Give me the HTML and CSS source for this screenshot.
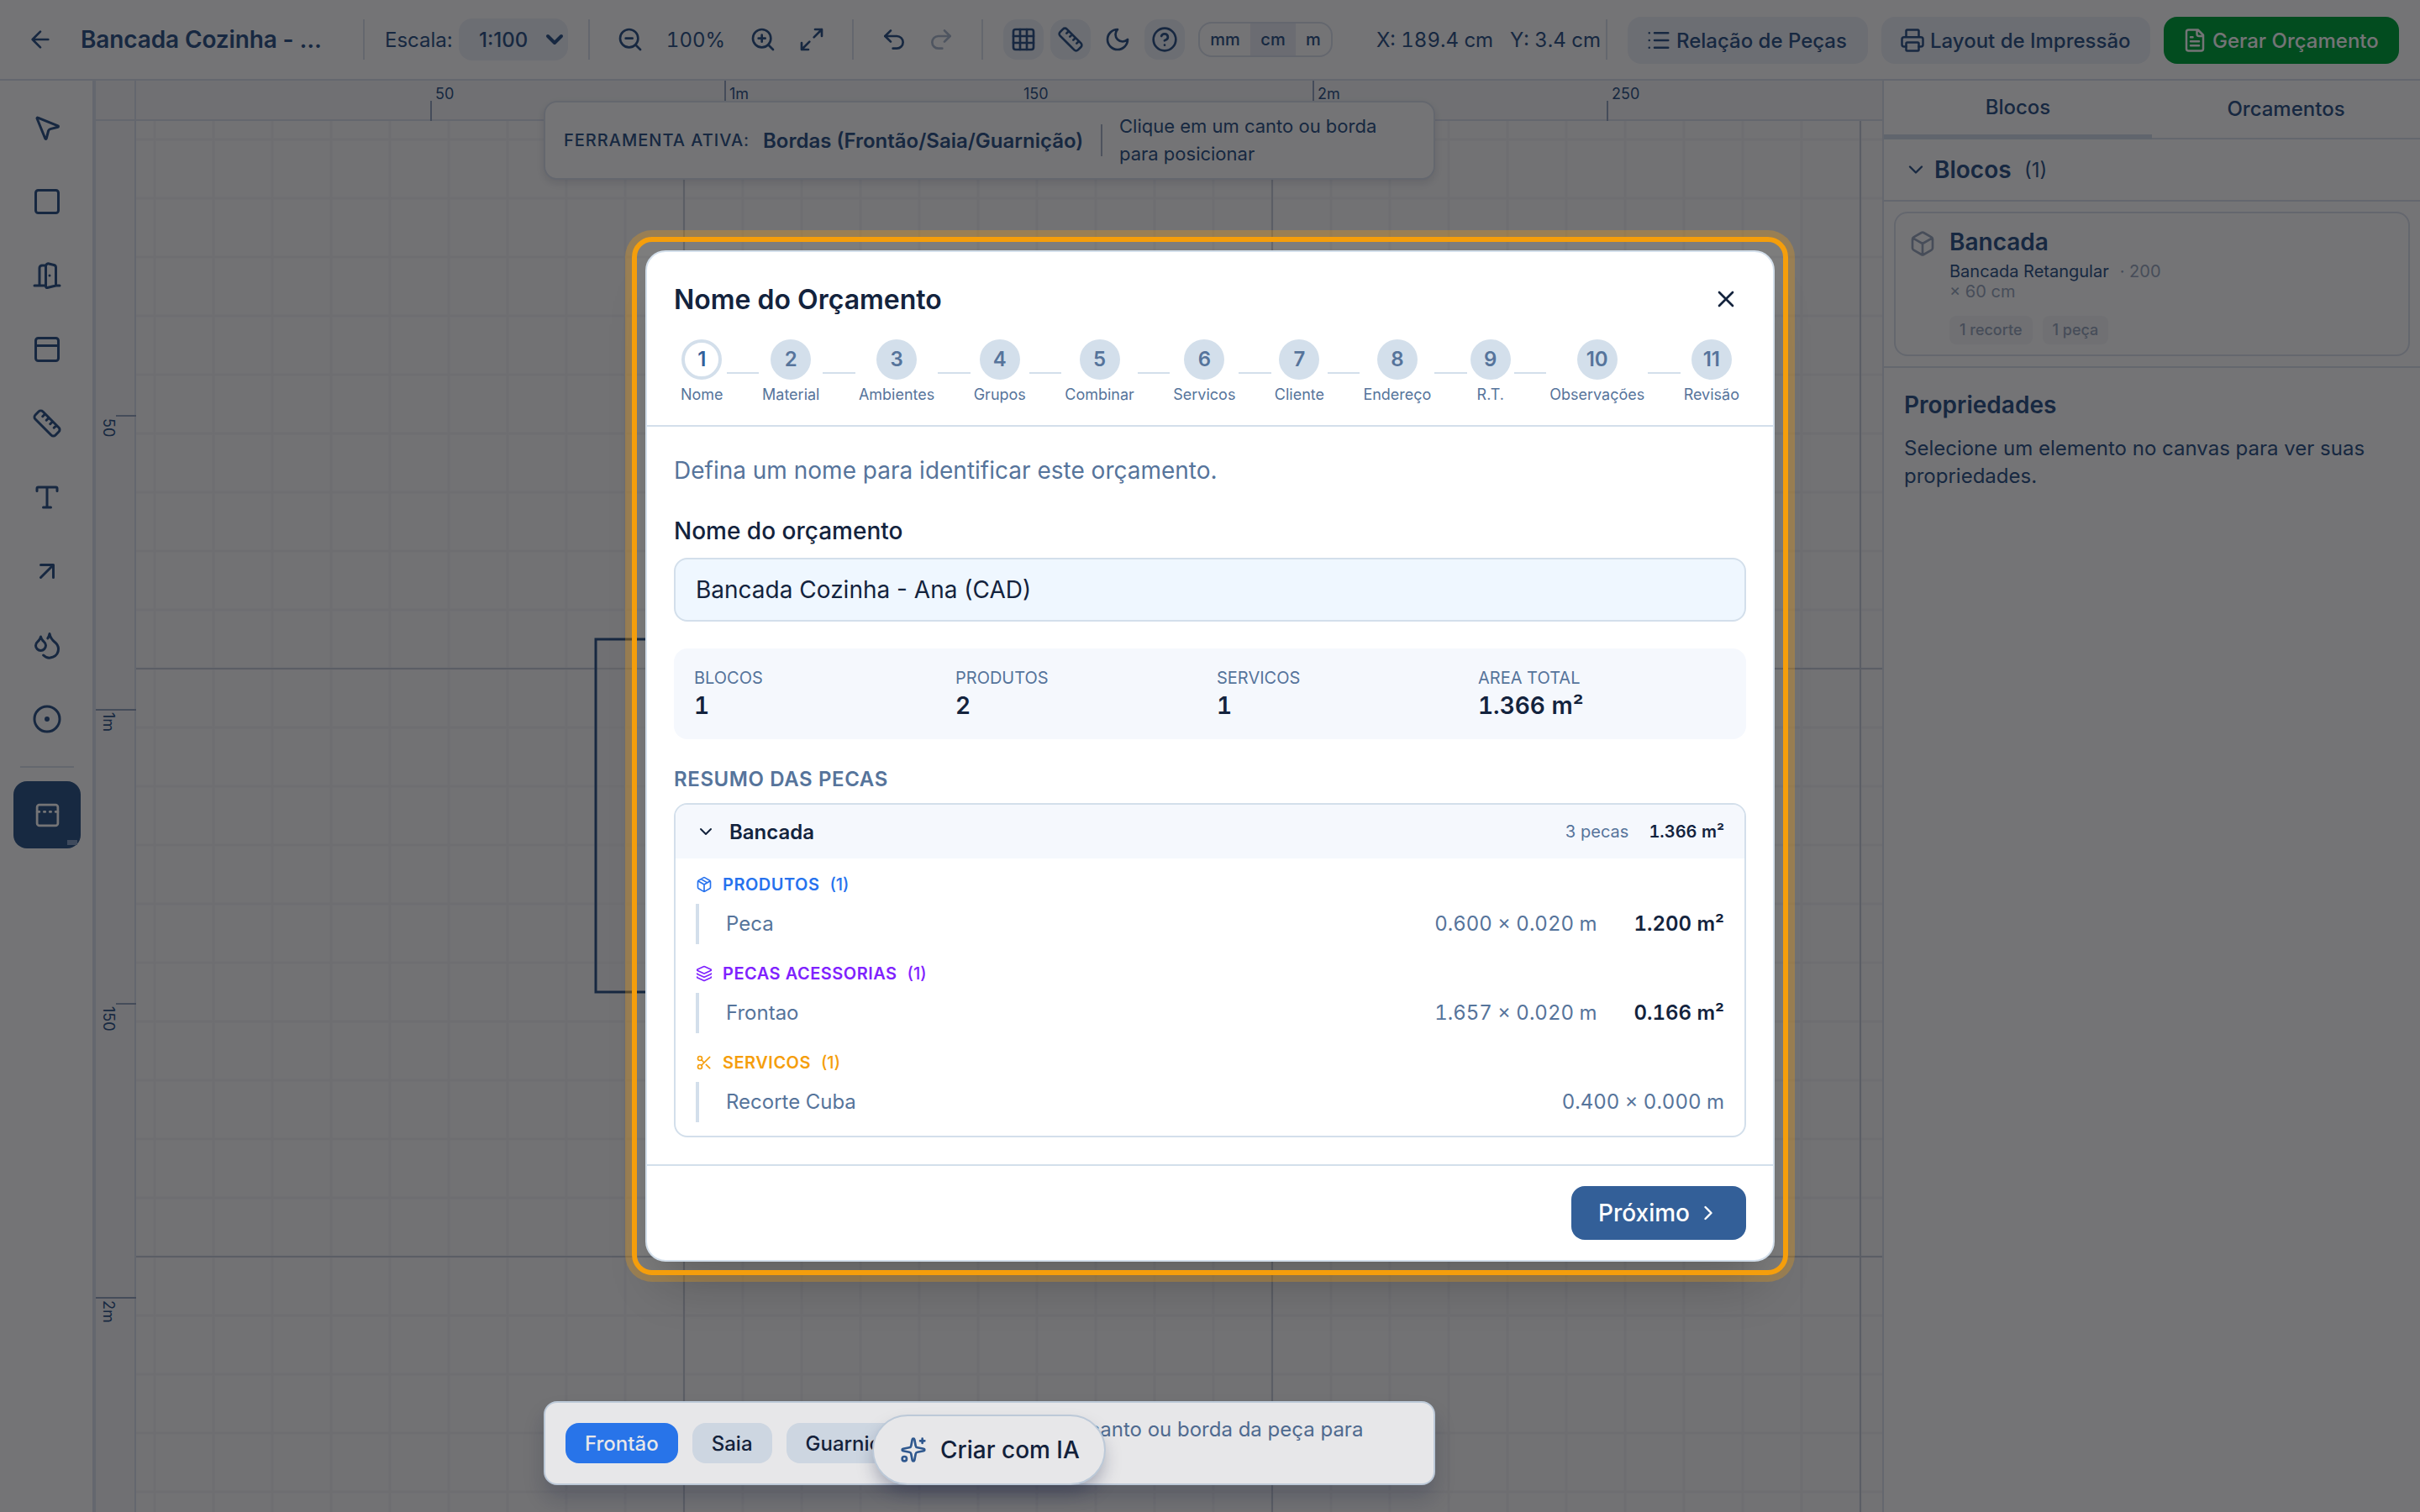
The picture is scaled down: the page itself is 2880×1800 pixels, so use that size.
FILE: index.html
```html
<!DOCTYPE html>
<html lang="pt-BR">
<head>
  <meta charset="UTF-8">
  <title>Bancada Cozinha - Ana</title>
  <link rel="stylesheet" href="styles.css">
</head>
<body>
  <div class="app">
    <!-- Top bar -->
    <header class="topbar">
      <svg class="icon back" viewBox="0 0 24 24"><path d="m12 19-7-7 7-7M19 12H5"/></svg>
      <h1 class="project-name">Bancada Cozinha - ...</h1>
      <span class="divider"></span>
      <label class="scale-label">Escala:</label>
      <div class="scale-select">
        <span>1:100</span>
        <svg class="icon" viewBox="0 0 24 24"><path d="m4 8 8 8 8-8"/></svg>
      </div>
      <span class="divider"></span>
      <div class="zoom-group">
        <svg class="icon" viewBox="0 0 24 24"><circle cx="11" cy="11" r="8"/><path d="m21 21-4.35-4.35M8 11h6"/></svg>
        <span class="zoom-value">100%</span>
        <svg class="icon" viewBox="0 0 24 24"><circle cx="11" cy="11" r="8"/><path d="m21 21-4.35-4.35M11 8v6M8 11h6"/></svg>
        <svg class="icon expand" viewBox="0 0 24 24"><path d="M15 3h6v6M21 3l-7 7M3 21l7-7M9 21H3v-6"/></svg>
      </div>
      <span class="divider"></span>
      <div class="history-group">
        <svg class="icon" viewBox="0 0 24 24"><path d="M9 14 4 9l5-5"/><path d="M4 9h10.500a5.500 5.500 0 0 1 0 11H11"/></svg>
        <svg class="icon disabled" viewBox="0 0 24 24"><path d="m15 14 5-5-5-5"/><path d="M20 9H9.500a5.500 5.500 0 0 0 0 11H13"/></svg>
      </div>
      <span class="divider"></span>
      <div class="toggle-group">
        <button class="toggle on"><svg class="icon" viewBox="0 0 24 24"><rect x="3" y="3" width="18" height="18" rx="2"/><path d="M3 9h18M3 15h18M9 3v18M15 3v18"/></svg></button>
        <button class="toggle on"><svg class="icon" viewBox="0 0 24 24"><path d="M21.300 15.300a2.400 2.400 0 0 1 0 3.400l-2.600 2.600a2.400 2.400 0 0 1-3.400 0L2.700 8.700a2.410 2.410 0 0 1 0-3.400l2.600-2.600a2.410 2.410 0 0 1 3.400 0ZM14.500 12.500l2-2M11.500 9.500l2-2M8.500 6.500l2-2M17.500 15.500l2-2"/></svg></button>
        <button class="toggle"><svg class="icon" viewBox="0 0 24 24"><path d="M12 3a6 6 0 0 0 9 9 9 9 0 1 1-9-9Z"/></svg></button>
        <button class="toggle on"><svg class="icon" viewBox="0 0 24 24"><circle cx="12" cy="12" r="10"/><path d="M9.090 9a3 3 0 0 1 5.830 1c0 2-3 3-3 3M12 17h.01"/></svg></button>
      </div>
      <div class="units">
        <span class="unit-mm">mm</span>
        <span class="unit-cm">cm</span>
        <span class="unit-m">m</span>
      </div>
      <div class="coords"><span class="coord-x">X: 189.4 cm</span><span>Y: 3.4 cm</span></div>
      <span class="divider"></span>
      <div class="actions">
        <button class="action parts">
          <svg class="icon" viewBox="0 0 24 24"><path d="M3 5h.01M3 12h.01M3 19h.01M8 5h13M8 12h13M8 19h13"/></svg>
          Relação de Peças
        </button>
        <button class="action print">
          <svg class="icon" viewBox="0 0 24 24"><path d="M6 18H4a2 2 0 0 1-2-2v-5a2 2 0 0 1 2-2h16a2 2 0 0 1 2 2v5a2 2 0 0 1-2 2h-2M6 9V3a1 1 0 0 1 1-1h10a1 1 0 0 1 1 1v6"/><rect x="6" y="14" width="12" height="8" rx="1"/></svg>
          Layout de Impressão
        </button>
        <button class="action budget">
          <svg class="icon" viewBox="0 0 24 24"><path d="M15 2H6a2 2 0 0 0-2 2v16a2 2 0 0 0 2 2h12a2 2 0 0 0 2-2V7ZM14 2v4a2 2 0 0 0 2 2h4M10 9H8M16 13H8M16 17H8"/></svg>
          Gerar Orçamento
        </button>
      </div>
    </header>

    <div class="workspace">
      <!-- Tools -->
      <nav class="tools">
        <button class="tool"><svg class="icon" viewBox="0 0 24 24"><path d="M4.037 4.688a.495.495 0 0 1 .651-.651l16 6.500a.5.500 0 0 1-.063.947l-6.124 1.580a2 2 0 0 0-1.438 1.435l-1.579 6.126a.5.500 0 0 1-.947.063z"/></svg></button>
        <button class="tool"><svg class="icon" viewBox="0 0 24 24"><rect x="3" y="3" width="18" height="18" rx="2"/></svg></button>
        <button class="tool"><svg class="icon" viewBox="0 0 24 24"><path d="M11 20H2M11 4.562v16.157a1 1 0 0 0 1.242.97L19 20V5.562a2 2 0 0 0-1.515-1.940l-4-1A2 2 0 0 0 11 4.561zM11 4H8a2 2 0 0 0-2 2v14M14 12h.01M22 20h-3"/></svg></button>
        <button class="tool"><svg class="icon" viewBox="0 0 24 24"><rect x="3" y="3" width="18" height="18" rx="2"/><path d="M3 9h18"/></svg></button>
        <button class="tool"><svg class="icon" viewBox="0 0 24 24"><path d="M21.300 15.300a2.400 2.400 0 0 1 0 3.400l-2.600 2.600a2.400 2.400 0 0 1-3.400 0L2.700 8.700a2.410 2.410 0 0 1 0-3.400l2.600-2.600a2.410 2.410 0 0 1 3.400 0ZM14.500 12.500l2-2M11.500 9.500l2-2M8.500 6.500l2-2M17.500 15.500l2-2"/></svg></button>
        <button class="tool"><svg class="icon" viewBox="0 0 24 24"><path d="M12 4v16M4 7V5a1 1 0 0 1 1-1h14a1 1 0 0 1 1 1v2M9 20h6"/></svg></button>
        <button class="tool"><svg class="icon" viewBox="0 0 24 24"><path d="M7 7h10v10M7 17 17 7"/></svg></button>
        <button class="tool"><svg class="icon" viewBox="0 0 24 24"><path d="M7 16.300c2.200 0 4-1.830 4-4.050 0-1.160-.57-2.260-1.710-3.190S7.290 6.750 7 5.300c-.29 1.450-1.140 2.840-2.290 3.760S3 11.100 3 12.250c0 2.220 1.800 4.050 4 4.050z"/><path d="M12.560 6.600A10.970 10.970 0 0 0 14 3.020c.5 2.500 2 4.900 4 6.500s3 3.500 3 5.500a6.980 6.980 0 0 1-11.910 4.970"/></svg></button>
        <button class="tool"><svg class="icon" viewBox="0 0 24 24"><circle cx="12" cy="12" r="10"/><circle cx="12" cy="12" r="1"/></svg></button>
        <hr class="tools-divider">
        <button class="tool active">
          <svg class="icon" viewBox="0 0 24 24"><rect x="3" y="3" width="18" height="18" rx="2"/><path d="M14 9h1M19 9h2M3 9h2M9 9h1"/></svg>
          <span class="tool-badge"></span>
        </button>
      </nav>

      <!-- Drawing canvas with rulers -->
      <main class="canvas">
        <svg class="drawing" width="2128" height="1704" viewBox="112 96 2128 1704">
          <defs>
            <pattern id="minor" x="184" y="166" width="70" height="70" patternUnits="userSpaceOnUse">
              <path class="minor" d="M0 0H70M0 0V70M70 0V70M0 70H70"/>
            </pattern>
          </defs>
          <rect x="112" y="96" width="2128" height="1704" fill="url(#minor)"/>
          <path class="major" d="M814 144V1800M1514 144V1800M2214 144V1800M162 796H2240M162 1496H2240"/>
          <rect class="piece" x="709" y="761" width="1400" height="420"/>
          <rect class="ruler-bg" x="112" y="96" width="2128" height="47"/>
          <rect class="ruler-bg" x="112" y="96" width="49" height="1704"/>
          <path class="ruler-line" d="M113 96V1800M161 96V1800M112 143H2240"/>
          <path class="tick" d="M513 120V144M863 96V144M1213 120V144M1563 96V144M1913 120V144M138 495H162M114 845H162M138 1195H162M114 1545H162"/>
          <g class="ruler-text">
            <text x="518" y="118">50</text>
            <text x="868" y="118">1m</text>
            <text x="1218" y="118">150</text>
            <text x="1568" y="118">2m</text>
            <text x="1918" y="118">250</text>
            <text transform="translate(123 498) rotate(90)">50</text>
            <text transform="translate(123 848) rotate(90)">1m</text>
            <text transform="translate(123 1198) rotate(90)">150</text>
            <text transform="translate(123 1548) rotate(90)">2m</text>
          </g>
        </svg>
        <div class="active-tool">
          <span class="active-label">FERRAMENTA ATIVA:</span>
          <strong>Bordas (Frontão/Saia/Guarnição)</strong>
          <span class="active-hint">Clique em um canto ou borda<br>para posicionar</span>
        </div>
      </main>

      <!-- Side panel -->
      <aside class="panel">
        <div class="tabs">
          <span class="tab selected">Blocos</span>
          <span class="tab">Orcamentos</span>
        </div>
        <div class="section-head">
          <svg class="icon" viewBox="0 0 24 24"><path d="m6 9 6 6 6-6"/></svg>
          <h2>Blocos</h2>
          <span>(1)</span>
        </div>
        <div class="blocks">
          <div class="block-card">
            <svg class="icon" viewBox="0 0 24 24"><path d="M21 8a2 2 0 0 0-1-1.730l-7-4a2 2 0 0 0-2 0l-7 4A2 2 0 0 0 3 8v8a2 2 0 0 0 1 1.730l7 4a2 2 0 0 0 2 0l7-4A2 2 0 0 0 21 16ZM3.300 7l8.700 5 8.700-5M12 22V12"/></svg>
            <div>
              <h3>Bancada</h3>
              <p class="block-meta"><b>Bancada Retangular</b><span>· 200</span><br>× 60 cm</p>
              <div class="chips"><span class="chip">1 recorte</span><span class="chip">1 peça</span></div>
            </div>
          </div>
        </div>
        <div class="properties">
          <h2>Propriedades</h2>
          <p>Selecione um elemento no canvas para ver suas propriedades.</p>
        </div>
      </aside>
    </div>
  </div>

  <div class="overlay"></div>

  <!-- Edge type bar -->
  <div class="edge-bar">
    <button class="edge-type selected">Frontão</button>
    <button class="edge-type">Saia</button>
    <button class="edge-type">Guarnição</button>
    <p class="edge-hint">Clique em um canto ou borda da peça para<br>posicionar</p>
  </div>
  <button class="ai-button">
    <svg class="icon" viewBox="0 0 24 24"><path d="M11.017 2.814a1 1 0 0 1 1.966 0l1.051 5.558a2 2 0 0 0 1.594 1.594l5.558 1.051a1 1 0 0 1 0 1.966l-5.558 1.051a2 2 0 0 0-1.594 1.594l-1.051 5.558a1 1 0 0 1-1.966 0l-1.051-5.558a2 2 0 0 0-1.594-1.594l-5.558-1.051a1 1 0 0 1 0-1.966l5.558-1.051a2 2 0 0 0 1.594-1.594zM20 2v4M22 4h-4"/><circle cx="4" cy="20" r="2"/></svg>
    Criar com IA
  </button>

  <!-- Budget wizard -->
  <div class="modal">
    <div class="modal-head">
      <div class="modal-title">
        <h2>Nome do Orçamento</h2>
        <svg class="icon" viewBox="0 0 24 24"><path d="M18 6 6 18M6 6l12 12"/></svg>
      </div>
      <div class="steps">
        <div class="step current"><b>1</b><span>Nome</span></div><i></i>
        <div class="step"><b>2</b><span>Material</span></div><i></i>
        <div class="step"><b>3</b><span>Ambientes</span></div><i></i>
        <div class="step"><b>4</b><span>Grupos</span></div><i></i>
        <div class="step"><b>5</b><span>Combinar</span></div><i></i>
        <div class="step"><b>6</b><span>Servicos</span></div><i></i>
        <div class="step"><b>7</b><span>Cliente</span></div><i></i>
        <div class="step"><b>8</b><span>Endereço</span></div><i></i>
        <div class="step"><b>9</b><span>R.T.</span></div><i></i>
        <div class="step"><b>10</b><span>Observações</span></div><i></i>
        <div class="step"><b>11</b><span>Revisão</span></div>
      </div>
    </div>

    <div class="modal-body">
      <p class="intro">Defina um nome para identificar este orçamento.</p>
      <label class="field-label">Nome do orçamento</label>
      <div class="field">Bancada Cozinha - Ana (CAD)</div>

      <div class="stats">
        <div class="stat"><span>BLOCOS</span><b>1</b></div>
        <div class="stat"><span>PRODUTOS</span><b>2</b></div>
        <div class="stat"><span>SERVICOS</span><b>1</b></div>
        <div class="stat"><span>AREA TOTAL</span><b>1.366 m²</b></div>
      </div>

      <h3 class="summary-title">RESUMO DAS PECAS</h3>
      <div class="summary">
        <div class="summary-head">
          <svg class="icon" viewBox="0 0 24 24"><path d="m6 9 6 6 6-6"/></svg>
          <b class="summary-name">Bancada</b>
          <span class="summary-count">3 pecas</span>
          <b class="summary-area">1.366 m²</b>
        </div>
        <div class="summary-body">
          <div class="group products">
            <svg class="icon" viewBox="0 0 24 24"><path d="M11 21.730a2 2 0 0 0 2 0l7-4A2 2 0 0 0 21 16V8a2 2 0 0 0-1-1.730l-7-4a2 2 0 0 0-2 0l-7 4A2 2 0 0 0 3 8v8a2 2 0 0 0 1 1.730zM12 22V12M3.290 7 12 12l8.710-5M7.500 4.270l9 5.150"/></svg>
            <b>PRODUTOS</b><span>(1)</span>
          </div>
          <div class="row"><span class="row-name">Peca</span><span>0.600 × 0.020 m</span><b>1.200 m²</b></div>
          <div class="group accessories">
            <svg class="icon" viewBox="0 0 24 24"><path d="M12.830 2.180a2 2 0 0 0-1.660 0L2.600 6.080a1 1 0 0 0 0 1.830l8.580 3.910a2 2 0 0 0 1.660 0l8.580-3.900a1 1 0 0 0 0-1.830zM2 12a1 1 0 0 0 .58.910l8.600 3.910a2 2 0 0 0 1.650 0l8.580-3.900A1 1 0 0 0 22 12M2 17a1 1 0 0 0 .58.910l8.600 3.910a2 2 0 0 0 1.650 0l8.580-3.900A1 1 0 0 0 22 17"/></svg>
            <b>PECAS ACESSORIAS</b><span>(1)</span>
          </div>
          <div class="row"><span class="row-name">Frontao</span><span>1.657 × 0.020 m</span><b>0.166 m²</b></div>
          <div class="group services">
            <svg class="icon" viewBox="0 0 24 24"><circle cx="6" cy="6" r="3"/><path d="M8.120 8.120 12 12M20 4 8.120 15.880"/><circle cx="6" cy="18" r="3"/><path d="M14.800 14.800 20 20"/></svg>
            <b>SERVICOS</b><span>(1)</span>
          </div>
          <div class="row"><span class="row-name">Recorte Cuba</span><span>0.400 × 0.000 m</span></div>
        </div>
      </div>
    </div>

    <div class="modal-foot">
      <button class="next">Próximo
        <svg class="icon" viewBox="0 0 24 24"><path d="m9 18 6-6-6-6"/></svg>
      </button>
    </div>
  </div>

  <div class="spotlight"></div>
</body>
</html>
```
FILE: styles.css
```css
* {
  box-sizing: border-box;
}
body {
  margin: 0;
  width: 2880px;
  height: 1800px;
  overflow: hidden;
  position: relative;
  font-family: Inter, sans-serif;
  font-size: 24px;
  color: #315688;
  background: #fff;
}
h1, h2, h3, p {
  margin: 0;
}
button {
  font: inherit;
  color: inherit;
  border: none;
  background: none;
  padding: 0;
}
.icon {
  width: 32px;
  height: 32px;
  flex: none;
  fill: none;
  stroke: currentColor;
  stroke-width: 2;
  stroke-linecap: round;
  stroke-linejoin: round;
}
.app {
  height: 1800px;
  display: flex;
  flex-direction: column;
}

/* Top bar */
.topbar {
  height: 96px;
  flex: none;
  display: flex;
  align-items: center;
  padding-left: 32px;
  border-bottom: 2px solid #dce2ee;
}
.project-name {
  width: 304px;
  margin-left: 32px;
  font-size: 28px;
  font-weight: 600;
  letter-spacing: -0.13px;
  white-space: nowrap;
}
.divider {
  width: 2px;
  height: 48px;
  flex: none;
  margin-left: 32px;
  background: #dce2ee;
}
.scale-label {
  width: 88px;
  margin-left: 24px;
}
.scale-select {
  width: 130px;
  height: 50px;
  display: flex;
  align-items: center;
  justify-content: space-between;
  padding: 0 4px 0 24px;
  border-radius: 16px;
  background: #eff2f9;
  font-weight: 500;
}
.scale-select .icon {
  width: 24px;
  height: 24px;
  stroke-width: 4;
}
.scale-select + .divider {
  margin-left: 24px;
}
.zoom-group {
  display: flex;
  align-items: center;
  margin-left: 32px;
}
.zoom-value {
  width: 96px;
  margin: 0 16px 0 14px;
  text-align: center;
  font-variant-numeric: tabular-nums;
}
.expand {
  margin-left: 26px;
}
.history-group {
  display: flex;
  gap: 24px;
  margin-left: 32px;
}
.disabled {
  opacity: 0.4;
}
.toggle-group {
  display: flex;
  gap: 8px;
  margin-left: 24px;
}
.toggle {
  width: 48px;
  height: 48px;
  display: grid;
  place-items: center;
  border-radius: 16px;
}
.toggle.on {
  background: #eff2f9;
}
.units {
  width: 160px;
  height: 42px;
  display: flex;
  margin-left: 16px;
  border: 2px solid #dce2ee;
  border-radius: 16px;
  font-size: 20px;
  font-weight: 500;
  line-height: 39px;
  text-align: center;
}
.unit-mm {
  width: 60px;
}
.unit-cm {
  width: 54px;
  background: #eaeef7;
}
.unit-m {
  width: 42px;
}
.coords {
  width: 273px;
  display: flex;
  margin-left: 52px;
  font-variant-numeric: tabular-nums;
  white-space: nowrap;
}
.coord-x {
  width: 159px;
}
.coords + .divider {
  margin-left: 0;
}
.actions {
  display: flex;
  gap: 16px;
  margin-left: 24px;
}
.action {
  height: 56px;
  display: flex;
  align-items: center;
  gap: 6px;
  padding-left: 22px;
  border-radius: 16px;
  background: #eff2f9;
  font-weight: 500;
  white-space: nowrap;
}
.action .icon {
  width: 30px;
  height: 30px;
}
.parts {
  width: 286px;
}
.print {
  width: 320px;
}
.budget {
  width: 280px;
  background: #00a63e;
  color: #fff;
}
.topbar .action {
  margin-top: 2px;
}

.workspace {
  flex: 1;
  display: flex;
}

/* Tools */
.tools {
  width: 112px;
  display: flex;
  flex-direction: column;
  align-items: center;
  gap: 8px;
  padding-top: 16px;
  border-right: 2px solid #dce2ee;
}
.tool {
  width: 80px;
  height: 80px;
  flex: none;
  display: grid;
  place-items: center;
  border-radius: 16px;
  position: relative;
  margin-left: 2px;
}
.tool .icon {
  width: 36px;
  height: 36px;
}
.tools-divider {
  width: 64px;
  height: 2px;
  margin: 8px 0 8px 2px;
  border: none;
  background: #dce2ee;
}
.tool.active {
  background: #31588a;
  color: #fff;
}
.tool.active .icon {
  width: 33px;
  height: 33px;
}
.tool-badge {
  position: absolute;
  right: 4px;
  bottom: 4px;
  width: 12px;
  height: 6px;
  background: #8aa3c4;
}

/* Canvas */
.canvas {
  width: 2128px;
  position: relative;
  background: #fafafa;
}
.drawing {
  display: block;
}
.minor {
  fill: none;
  stroke: #f2f3f5;
  stroke-width: 3;
}
.major {
  fill: none;
  stroke: #c9ced8;
  stroke-width: 2;
}
.piece {
  fill: #f3f3f4;
  fill-opacity: 0.4;
  stroke: #315688;
  stroke-width: 3;
}
.ruler-bg {
  fill: #f6f7f8;
}
.ruler-line {
  fill: none;
  stroke: #dce2ee;
  stroke-width: 2;
}
.tick {
  fill: none;
  stroke: #97a7c0;
  stroke-width: 2;
}
.ruler-text {
  font-size: 18px;
  fill: #315688;
}
.active-tool {
  position: absolute;
  left: 535px;
  top: 24px;
  width: 1061px;
  height: 94px;
  display: flex;
  align-items: center;
  padding-left: 22px;
  border: 2px solid #dce2ee;
  border-radius: 16px;
  background: #fff;
  box-shadow: 0 4px 8px rgba(30, 41, 80, 0.12);
  white-space: nowrap;
}
.active-label {
  width: 237px;
  font-size: 20px;
  font-weight: 500;
  letter-spacing: 1px;
}
.active-tool strong {
  width: 402px;
  font-weight: 600;
}
.active-hint {
  line-height: 33px;
  font-size: 22px;
}
.active-hint::before {
  content: "";
  float: left;
  width: 2px;
  height: 38px;
  margin: 14px 20px 14px 0;
  background: #aab6ca;
}

/* Side panel */
.panel {
  width: 640px;
  border-left: 2px solid #dce2ee;
}
.tabs {
  height: 70px;
  display: flex;
}
.tab {
  flex: 1;
  border-bottom: 2px solid #dce2ee;
  line-height: 68px;
  text-align: center;
  font-weight: 500;
}
.tab.selected {
  border-bottom: 6px solid #d3dfeb;
  line-height: 64px;
}
.section-head {
  height: 74px;
  display: flex;
  align-items: center;
  padding-left: 24px;
  border-bottom: 2px solid #dce2ee;
}
.section-head .icon {
  width: 28px;
  height: 28px;
}
.section-head h2 {
  width: 107px;
  margin-left: 8px;
}
.panel h2,
.panel h3 {
  font-size: 28px;
  font-weight: 600;
}
.blocks {
  height: 198px;
  padding: 12px;
  border-bottom: 2px solid #dce2ee;
}
.block-card {
  width: 614px;
  height: 172px;
  display: flex;
  gap: 16px;
  padding: 16px;
  border: 2px solid #dce2ee;
  border-radius: 16px;
}
.block-card .icon {
  margin-top: 4px;
  color: #9aa9bf;
}
.block-card h3 {
  line-height: 36px;
}
.block-meta {
  margin-top: 5px;
  font-size: 20px;
  line-height: 24px;
  color: #9aa9bf;
}
.block-meta b {
  margin-right: 13px;
  font-weight: 400;
  color: #315688;
}
.chips {
  display: flex;
  gap: 12px;
  margin-top: 17px;
}
.chip {
  height: 34px;
  padding: 0 12px;
  border-radius: 8px;
  background: #f6f7f8;
  color: #9aa9bf;
  font-size: 18px;
  font-weight: 500;
  line-height: 34px;
}
.properties {
  padding: 24px;
}
.properties h2 {
  line-height: 40px;
}
.properties p {
  width: 580px;
  margin-top: 15px;
  line-height: 33px;
}

.overlay {
  position: absolute;
  inset: 0;
  background: rgba(0, 0, 0, 0.5);
}

/* Floating bottom bar */
.edge-bar {
  position: absolute;
  left: 647px;
  top: 1668px;
  width: 1061px;
  height: 100px;
  display: flex;
  align-items: center;
  gap: 17px;
  padding-left: 24px;
  border: 2px solid #d0deec;
  border-radius: 16px;
  background: #fff;
  box-shadow: 0 16px 24px rgba(15, 23, 60, 0.2);
  white-space: nowrap;
}
.edge-type {
  height: 48px;
  padding: 0 23px;
  border-radius: 16px;
  background: #e2ecf6;
  color: #13233d;
  font-weight: 500;
}
.edge-type.selected {
  background: #2b7fff;
  color: #fff;
}
.edge-hint {
  margin-left: 16px;
  color: #56749b;
  line-height: 32px;
}
.ai-button {
  position: absolute;
  left: 1038px;
  top: 1684px;
  width: 278px;
  height: 84px;
  display: flex;
  align-items: center;
  gap: 16px;
  padding-left: 31px;
  border: 2px solid #d0deec;
  border-radius: 42px;
  background: #fff;
  color: #13233d;
  font-size: 28px;
  font-weight: 500;
  box-shadow: 0 12px 22px -4px rgba(15, 23, 60, 0.35);
}
.ai-button .icon {
  color: #33609a;
}

/* Modal */
.modal {
  position: absolute;
  left: 768px;
  top: 298px;
  width: 1344px;
  height: 1204px;
  border: 2px solid #d3dfeb;
  border-radius: 24px;
  background: #fff;
  color: #13233d;
  box-shadow: 0 40px 60px -20px rgba(0, 0, 0, 0.25);
}
.modal-head {
  height: 208px;
  padding: 32px 32px 0;
  border-bottom: 2px solid #d3dfeb;
}
.modal-title {
  height: 48px;
  display: flex;
  align-items: center;
  justify-content: space-between;
  padding-right: 8px;
}
.modal-title h2 {
  font-size: 32px;
  font-weight: 600;
}
.steps {
  display: flex;
  align-items: center;
  padding: 0 8px;
  margin-top: 24px;
}
.steps i {
  flex: 1;
  height: 2px;
  margin: 0 4px;
  background: #d3dfeb;
}
.step {
  min-width: 48px;
  display: flex;
  flex-direction: column;
  align-items: center;
  gap: 5px;
  color: #56749b;
  font-size: 18px;
  line-height: 26px;
}
.step b {
  width: 48px;
  height: 48px;
  border-radius: 50%;
  background: #d3dfeb;
  font-size: 24px;
  font-weight: 600;
  line-height: 48px;
  text-align: center;
}
.step.current b {
  border: 4px solid #d3dfeb;
  background: #fff;
  color: #33609a;
  line-height: 40px;
}
.modal-body {
  height: 878px;
  padding: 32px;
}
.intro {
  color: #56749b;
  font-size: 28px;
  line-height: 40px;
}
.field-label {
  display: block;
  margin-top: 36px;
  font-size: 28px;
  font-weight: 500;
  line-height: 32px;
}
.field {
  height: 76px;
  margin-top: 16px;
  padding-left: 24px;
  border: 2px solid #d3dfeb;
  border-radius: 16px;
  background: #eff7ff;
  font-size: 28px;
  line-height: 72px;
}
.stats {
  height: 108px;
  display: grid;
  grid-template-columns: repeat(4, 311px);
  margin-top: 32px;
  padding: 21px 24px;
  border-radius: 16px;
  background: #f5f8fd;
}
.stat {
  display: flex;
  flex-direction: column;
}
.stat span {
  color: #56749b;
  font-size: 20px;
  line-height: 28px;
}
.stat b {
  margin-top: 1px;
  font-size: 28px;
  font-weight: 600;
  line-height: 36px;
  font-variant-numeric: tabular-nums;
}
.summary-title {
  margin-top: 32px;
  color: #56749b;
  font-size: 24px;
  font-weight: 600;
  line-height: 32px;
  letter-spacing: 0.6px;
}
.summary {
  height: 398px;
  margin-top: 12px;
  border: 2px solid #d3dfeb;
  border-radius: 16px;
  overflow: hidden;
  font-variant-numeric: tabular-nums;
}
.summary-head {
  height: 64px;
  display: flex;
  align-items: center;
  padding: 0 24px;
  background: #f5f8fd;
}
.summary-head .icon {
  width: 24px;
  height: 24px;
}
.summary b {
  font-weight: 600;
}
.summary-name {
  flex: 1;
  margin-left: 16px;
}
.summary-count {
  color: #56749b;
  font-size: 20px;
}
.summary-area {
  margin-left: 24px;
  font-size: 20px;
}
.summary-body {
  padding: 15px 24px;
}
.group {
  height: 32px;
  display: flex;
  align-items: center;
  margin-bottom: 7px;
  font-size: 20px;
  font-variant-numeric: normal;
}
.group b {
  margin: 0 12px;
  letter-spacing: 0.5px;
}
.group span {
  font-weight: 500;
}
.group .icon {
  width: 20px;
  height: 20px;
}
.products {
  color: #2672ee;
}
.accessories {
  color: #7f22fe;
}
.services {
  color: #f59e0b;
}
.row {
  height: 48px;
  display: flex;
  align-items: center;
  margin-bottom: 19px;
  padding: 0 0 2px 32px;
  border-left: 4px solid #d3dfeb;
  color: #56749b;
}
.row-name {
  flex: 1;
}
.row b {
  margin-left: 44px;
  color: #13233d;
}
.modal-foot {
  height: 114px;
  display: flex;
  justify-content: flex-end;
  padding: 24px 32px;
  border-top: 2px solid #d3dfeb;
}
.next {
  width: 208px;
  height: 64px;
  display: flex;
  align-items: center;
  gap: 8px;
  padding-left: 32px;
  border-radius: 16px;
  background: #335f98;
  color: #fff;
  font-size: 28px;
  font-weight: 500;
}
.next .icon {
  width: 28px;
  height: 28px;
}

/* Guided tour highlight */
.spotlight {
  position: absolute;
  left: 752px;
  top: 282px;
  width: 1376px;
  height: 1236px;
  border: 6px solid #f59e0b;
  border-radius: 24px;
  box-shadow: 0 0 0 8px rgba(245, 158, 11, 0.3), 0 0 0 3000px rgba(15, 23, 42, 0.1);
}
```
